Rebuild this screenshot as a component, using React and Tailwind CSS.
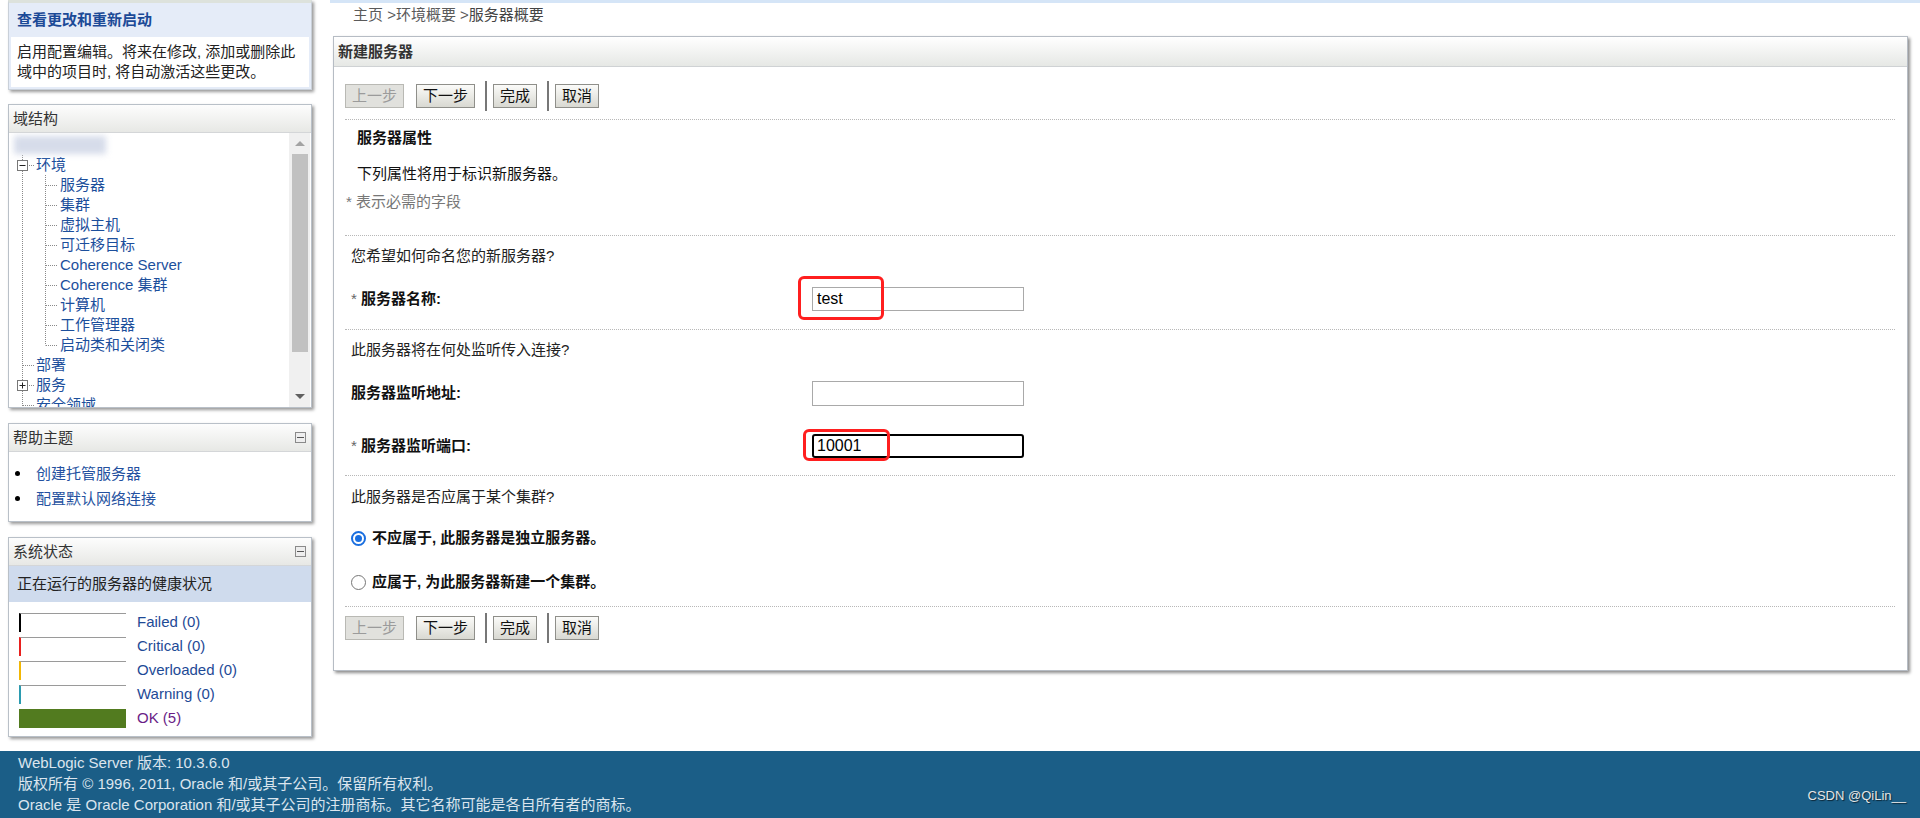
import React from 'react';

// 树形连接线（虚线）
const Guide = ({ type, box }) => (
    <svg width="23" height="20" className="shrink-0">
        {type !== 'none' && (
            <line x1="10.5" y1="0" x2="10.5" y2={type === 'last' ? 10.5 : 20} stroke="#8a8a8a" strokeDasharray="1 1" />
        )}
        {type !== 'pass' && type !== 'none' && (
            <line x1="11" y1="10.5" x2="23" y2="10.5" stroke="#8a8a8a" strokeDasharray="1 1" />
        )}
        {box && (
            <>
                <rect x="5.5" y="5.5" width="10" height="10" fill="#fff" stroke="#777" />
                <line x1="7.5" y1="10.5" x2="13.5" y2="10.5" stroke="#222" />
                {box === 'plus' && <line x1="10.5" y1="7.5" x2="10.5" y2="13.5" stroke="#222" />}
            </>
        )}
    </svg>
);

const TreeRow = ({ level, label, last, box }) => (
    <div className="flex h-[20px] items-center whitespace-nowrap">
        {level === 1 ? (
            <Guide type="mid" box={box} />
        ) : (
            <>
                <Guide type="pass" />
                <Guide type={last ? 'last' : 'mid'} />
            </>
        )}
        <span className={`${level === 1 ? 'ml-[1px]' : 'ml-[2px]'} text-[#1c4f9c] leading-[20px]`}>{label}</span>
    </div>
);

const PanelHeader = ({ title, collapse }) => (
    <div className="h-[28px] flex items-center justify-between px-[4px] bg-gradient-to-b from-[#fdfdfd] to-[#e7e8e5] border-b border-[#d4d6d8] text-[#333]">
        <span>{title}</span>
        {collapse && (
            <span className="w-[11px] h-[11px] mr-[1px] border border-[#8a8a8a] bg-[#eeeeee] flex items-center justify-center">
                <span className="w-[7px] h-[1px] bg-[#555]"></span>
            </span>
        )}
    </div>
);

const Btn = ({ children, disabled }) =>
    disabled ? (
        <button className="h-[24px] px-[6px] border border-[#b9b9b4] bg-[#e1e1dd] text-[#9b9b9b] leading-[20px]">{children}</button>
    ) : (
        <button className="h-[24px] px-[6px] border border-[#8f8f8a] bg-gradient-to-b from-[#fbfbf9] to-[#d9d9d2] text-[#111] leading-[20px]">{children}</button>
    );

const ButtonBar = ({ className }) => (
    <div className={`flex items-center h-[30px] ${className}`}>
        <Btn disabled>上一步</Btn>
        <span className="ml-[12px]"><Btn>下一步</Btn></span>
        <span className="ml-[10px] w-[2px] h-[30px] bg-[#777]"></span>
        <span className="ml-[6px]"><Btn>完成</Btn></span>
        <span className="ml-[10px] w-[2px] h-[30px] bg-[#777]"></span>
        <span className="ml-[6px]"><Btn>取消</Btn></span>
    </div>
);

const Dotted = () => <div className="border-t border-dotted border-[#b8b8b8]"></div>;

const Radio = ({ checked }) =>
    checked ? (
        <span className="w-[15px] h-[15px] rounded-full border-2 border-[#1a6fe0] bg-white flex items-center justify-center shrink-0">
            <span className="w-[7px] h-[7px] rounded-full bg-[#1a6fe0]"></span>
        </span>
    ) : (
        <span className="w-[15px] h-[15px] rounded-full border border-[#767676] bg-white shrink-0"></span>
    );

const StatusRow = ({ color, label, ok }) => (
    <div className="flex items-center h-[24px]">
        {ok ? (
            <div className="w-[107px] h-[19px] bg-[#527b1f]"></div>
        ) : (
            <div className={`w-[107px] h-[19px] border-t border-t-[#9a9a9a] border-l-2 ${color} bg-white`}></div>
        )}
        <span className={`ml-[11px] ${ok ? 'text-[#6a1d86]' : 'text-[#1e4a96]'}`}>{label}</span>
    </div>
);

export default function App() {
    const children = ['服务器', '集群', '虚拟主机', '可迁移目标', 'Coherence Server', 'Coherence 集群', '计算机', '工作管理器', '启动类和关闭类'];

    return (
        <div className='w-[1920px] h-[818px] overflow-hidden bg-white text-[15px] leading-[20px] text-[#222] font-["Liberation_Sans","Noto_Sans_CJK_SC",sans-serif]'>
            <div className="flex h-[751px]">
                {/* 左侧栏 */}
                <div className="w-[304px] ml-[8px] shrink-0 flex flex-col">
                    {/* 更改中心 */}
                    <div className="h-[90px] border-t-[3px] border-[#dde2dc] bg-[#e5ecf8] border-x border-x-[#c9d0d9] border-b border-b-[#c9d0d9] shadow-[2px_2px_3px_rgba(0,0,0,0.4)]">
                        <div className="h-[34px] flex items-center pl-[8px] font-bold text-[#1c4a97]">查看更改和重新启动</div>
                        <div className="mx-[2px] h-[50px] bg-white pl-[6px] pt-[5px] text-[#222]">
                            启用配置编辑。将来在修改, 添加或删除此<br />域中的项目时, 将自动激活这些更改。
                        </div>
                    </div>

                    {/* 域结构 */}
                    <div className="mt-[14px] h-[304px] border border-[#b9c0c8] bg-white shadow-[2px_2px_3px_rgba(0,0,0,0.4)] flex flex-col">
                        <PanelHeader title="域结构" />
                        <div className="flex flex-1 overflow-hidden">
                            <div className="flex-1 pl-[3px] pt-[2px] overflow-hidden">
                                <div className="h-[20px] flex items-center">
                                    <span className="ml-[2px] w-[92px] h-[18px] bg-[#d6dcea] blur-[3px]"></span>
                                </div>
                                <TreeRow level={1} label="环境" box="minus" />
                                {children.map((c, i) => (
                                    <TreeRow key={c} level={2} label={c} last={i === children.length - 1} />
                                ))}
                                <TreeRow level={1} label="部署" />
                                <TreeRow level={1} label="服务" box="plus" />
                                <TreeRow level={1} label="安全领域" />
                            </div>
                            {/* 滚动条 */}
                            <div className="w-[21px] mr-[1px] bg-[#f0f0f0] flex flex-col items-center">
                                <div className="h-[21px] flex items-center justify-center">
                                    <span className="w-0 h-0 border-x-[5px] border-x-transparent border-b-[5px] border-b-[#a3a3a3]"></span>
                                </div>
                                <div className="w-[16px] ml-[1px] h-[198px] bg-[#c1c1c1]"></div>
                                <div className="flex-1"></div>
                                <div className="h-[21px] flex items-center justify-center">
                                    <span className="w-0 h-0 border-x-[5px] border-x-transparent border-t-[5px] border-t-[#606060]"></span>
                                </div>
                            </div>
                        </div>
                    </div>

                    {/* 帮助主题 */}
                    <div className="mt-[15px] h-[99px] border border-[#b9c0c8] bg-white shadow-[2px_2px_3px_rgba(0,0,0,0.4)]">
                        <PanelHeader title="帮助主题" collapse />
                        <div className="pt-[9px]">
                            <div className="flex items-center h-[25px]">
                                <span className="w-[5px] h-[5px] rounded-full bg-black ml-[6px]"></span>
                                <span className="ml-[16px] text-[#2451a0]">创建托管服务器</span>
                            </div>
                            <div className="flex items-center h-[25px]">
                                <span className="w-[5px] h-[5px] rounded-full bg-black ml-[6px]"></span>
                                <span className="ml-[16px] text-[#2451a0]">配置默认网络连接</span>
                            </div>
                        </div>
                    </div>

                    {/* 系统状态 */}
                    <div className="mt-[15px] h-[200px] border border-[#b9c0c8] bg-white shadow-[2px_2px_3px_rgba(0,0,0,0.4)]">
                        <PanelHeader title="系统状态" collapse />
                        <div className="h-[36px] bg-[#cfdbed] flex items-center pl-[8px] text-[#222]">正在运行的服务器的健康状况</div>
                        <div className="pt-[8px] pl-[10px]">
                            <StatusRow color="border-l-black" label="Failed (0)" />
                            <StatusRow color="border-l-[#e8201e]" label="Critical (0)" />
                            <StatusRow color="border-l-[#f2b705]" label="Overloaded (0)" />
                            <StatusRow color="border-l-[#2b9bb0]" label="Warning (0)" />
                            <StatusRow ok label="OK (5)" />
                        </div>
                    </div>
                </div>

                {/* 主区域 */}
                <div className="ml-[18px] flex-1 flex flex-col">
                    <div className="h-[3px] bg-[#d5e5f7]"></div>
                    <div className="h-[33px] pt-[2px] pl-[23px] text-[#5a5a5a]">
                        主页 &gt;环境概要 &gt;<span className="text-[#444]">服务器概要</span>
                    </div>

                    <div className="ml-[3px] w-[1575px] h-[635px] border border-[#b6bcc4] bg-white shadow-[2px_2px_3px_rgba(0,0,0,0.45)]">
                        <div className="h-[30px] flex items-center pl-[4px] bg-gradient-to-b from-[#ffffff] to-[#e6e8e5] border-b border-[#cfd2d4] text-[#333] font-semibold">
                            新建服务器
                        </div>
                        <div className="pl-[11px] pr-[12px]">
                            <ButtonBar className="mt-[14px]" />
                            <div className="mt-[8px]"><Dotted /></div>
                            <div className="h-[36px] flex items-center pl-[12px] font-bold text-[#111]">服务器属性</div>
                            <div className="h-[36px] flex items-center pl-[12px] text-[#111]">下列属性将用于标识新服务器。</div>
                            <div className="h-[20px] flex items-center pl-[1px] text-[#777]">* 表示必需的字段</div>
                            <div className="h-[23px]"></div>
                            <Dotted />

                            <div className="h-[40px] flex items-center pl-[6px] text-[#222]">您希望如何命名您的新服务器?</div>
                            <div className="h-[46px] flex items-center">
                                <div className="w-[467px] pl-[6px] font-bold text-[#111]"><span className="font-normal text-[#666]">*</span> 服务器名称:</div>
                                <div className="relative">
                                    <div className="w-[212px] h-[24px] border border-[#a9a9a9] pl-[4px] flex items-center text-[16px] text-black font-['Liberation_Sans',sans-serif]">test</div>
                                    <div className="absolute left-[-14px] top-[-11px] w-[86px] h-[44px] border-[3px] border-[#ff1f1f] rounded-[6px]"></div>
                                </div>
                            </div>
                            <div className="h-[7px]"></div>
                            <Dotted />

                            <div className="h-[40px] flex items-center pl-[6px] text-[#222]">此服务器将在何处监听传入连接?</div>
                            <div className="h-[46px] flex items-center">
                                <div className="w-[467px] pl-[6px] font-bold text-[#111]">服务器监听地址:</div>
                                <div className="w-[212px] h-[25px] border border-[#a9a9a9]"></div>
                            </div>
                            <div className="h-[59px] flex items-center">
                                <div className="w-[467px] pl-[6px] font-bold text-[#111]"><span className="font-normal text-[#666]">*</span> 服务器监听端口:</div>
                                <div className="relative">
                                    <div className="w-[212px] h-[24px] border-2 border-black rounded-[3px] pl-[3px] flex items-center text-[16px] text-black font-['Liberation_Sans',sans-serif]">10001</div>
                                    <div className="absolute left-[-9px] top-[-5px] w-[87px] h-[32px] border-[3px] border-[#ff1f1f] rounded-[6px]"></div>
                                </div>
                            </div>
                            <Dotted />

                            <div className="h-[42px] flex items-center pl-[6px] text-[#222]">此服务器是否应属于某个集群?</div>
                            <div className="h-[40px] flex items-center pl-[6px]">
                                <Radio checked />
                                <span className="ml-[6px] font-bold text-[#111]">不应属于, 此服务器是独立服务器。</span>
                            </div>
                            <div className="h-[48px] flex items-center pl-[6px]">
                                <Radio />
                                <span className="ml-[6px] font-bold text-[#111]">应属于, 为此服务器新建一个集群。</span>
                            </div>
                            <Dotted />
                            <ButtonBar className="mt-[6px]" />
                        </div>
                    </div>
                </div>
            </div>

            {/* 页脚 */}
            <div className="relative h-[67px] bg-[#1b5e87] text-[#dbe5ee] pl-[18px] leading-[21px] pt-[1px]">
                <div>WebLogic Server 版本: 10.3.6.0</div>
                <div>版权所有 © 1996, 2011, Oracle 和/或其子公司。保留所有权利。</div>
                <div>Oracle 是 Oracle Corporation 和/或其子公司的注册商标。其它名称可能是各自所有者的商标。</div>
                <div className="absolute right-[14px] bottom-[14px] text-[13px] leading-[16px] text-[#e6e6e6] [text-shadow:1px_1px_1px_rgba(0,0,0,0.6)]">CSDN @QiLin__</div>
            </div>
        </div>
    );
}
